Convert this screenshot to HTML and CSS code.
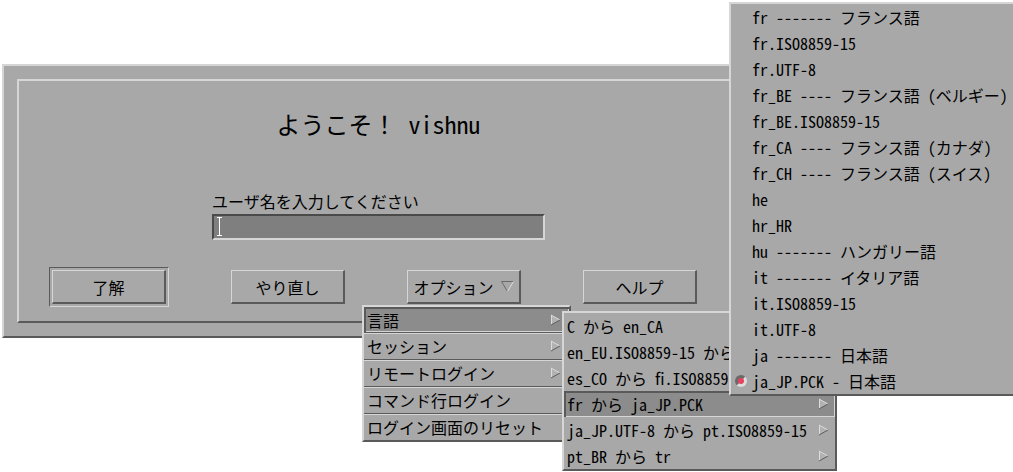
FILE: index.html
```html
<!DOCTYPE html>
<html lang="ja">
<head>
<meta charset="UTF-8">
<title>ログイン</title>
<link rel="stylesheet" href="styles.css">
</head>
<body>
<svg class="defs" aria-hidden="true">
<symbol id="tri-right" viewBox="0 0 11 12">
<polygon points="1,1 10,6 1,11" fill="#b2b2b2"/>
<path d="M1.5 1V11M1 1L10 6" stroke="#dcdcdc" fill="none"/>
<path d="M1 11L10 6" stroke="#5e5e5e" fill="none"/>
</symbol>
<symbol id="tri-down" viewBox="0 0 13 11">
<path d="M0.5 0.5H12.5M0.5 0.5L6.5 10.5" stroke="#6a6a6a" fill="none"/>
<path d="M12.5 0.5L6.5 10.5" stroke="#dcdcdc" fill="none"/>
</symbol>
</svg>

<div class="login">
<div class="frame">
<h1 class="welcome">ようこそ<span class="wide">！</span> vishnu</h1>
<div class="user">
<label for="name">ユーザ名を入力してください</label>
<div class="field" id="name">
<svg class="ibeam" width="5" height="19" viewBox="0 0 5 19"><path d="M0 0.5H5M2.5 0V19M0 18.5H5" stroke="#fff" fill="none"/></svg>
</div>
</div>
<div class="buttons">
<div class="default"><button>了解</button></div>
<button>やり直し</button>
<button>オプション<svg class="down" width="13" height="11"><use href="#tri-down"/></svg></button>
<button>ヘルプ</button>
</div>
</div>
</div>

<div class="menu options">
<div class="item armed">言語<svg class="arrow"><use href="#tri-right"/></svg></div>
<div class="item">セッション<svg class="arrow"><use href="#tri-right"/></svg></div>
<div class="item">リモートログイン<svg class="arrow"><use href="#tri-right"/></svg></div>
<div class="item">コマンド行ログイン</div>
<div class="item">ログイン画面のリセット</div>
</div>

<div class="menu locales">
<div class="item">C から en_CA<svg class="arrow"><use href="#tri-right"/></svg></div>
<div class="item">en_EU.ISO8859-15 から es_BO<svg class="arrow"><use href="#tri-right"/></svg></div>
<div class="item">es_CO から fi.ISO8859-15<svg class="arrow"><use href="#tri-right"/></svg></div>
<div class="item armed">fr から ja_JP.PCK<svg class="arrow"><use href="#tri-right"/></svg></div>
<div class="item">ja_JP.UTF-8 から pt.ISO8859-15<svg class="arrow"><use href="#tri-right"/></svg></div>
<div class="item">pt_BR から tr<svg class="arrow"><use href="#tri-right"/></svg></div>
</div>

<div class="menu languages">
<div class="item">fr ------- フランス語</div>
<div class="item">fr.ISO8859-15</div>
<div class="item">fr.UTF-8</div>
<div class="item">fr_BE ---- フランス語 (ベルギー)</div>
<div class="item">fr_BE.ISO8859-15</div>
<div class="item">fr_CA ---- フランス語 (カナダ)</div>
<div class="item">fr_CH ---- フランス語 (スイス)</div>
<div class="item">he</div>
<div class="item">hr_HR</div>
<div class="item">hu ------- ハンガリー語</div>
<div class="item">it ------- イタリア語</div>
<div class="item">it.ISO8859-15</div>
<div class="item">it.UTF-8</div>
<div class="item">ja ------- 日本語</div>
<div class="item selected"><span class="radio"></span>ja_JP.PCK - 日本語</div>
</div>
</body>
</html>
```

FILE: styles.css
```css
body {
margin: 0;
padding: 64px 0 0 2px;
background: #fff;
font-family: "Noto Sans CJK JP", sans-serif;
font-feature-settings: "hwid";
font-size: 16px;
color: #000;
}

.defs {
position: absolute;
width: 0;
height: 0;
}

/* login window */
.login {
width: 753px;
padding: 13px;
box-sizing: border-box;
background: #a8a8a8;
border: 2px solid;
border-color: #d6d6d6 #5a5a5a #5a5a5a #d6d6d6;
}

.frame {
padding: 29px 0 14px;
border: 2px solid;
border-color: #d6d6d6 #5a5a5a #5a5a5a #d6d6d6;
}

.welcome {
margin: 0;
font-size: 24px;
font-weight: normal;
line-height: 28px;
text-align: center;
}

.wide {
font-feature-settings: normal;
}

.user {
margin: 53px 0 0 193px;
}

.user label {
display: block;
line-height: 20px;
margin-bottom: 3px;
}

.field {
width: 333px;
height: 26px;
box-sizing: border-box;
padding: 1px 0 0 3px;
background: #7f7f7f;
border: 2px solid;
border-color: #4a4a4a #d6d6d6 #d6d6d6 #4a4a4a;
}

.ibeam {
display: block;
}

.buttons {
display: flex;
align-items: center;
gap: 62px;
margin-top: 27px;
padding-left: 30px;
}

.default {
padding: 2px;
border: 1px solid;
border-color: #5a5a5a #d6d6d6 #d6d6d6 #5a5a5a;
}

button {
display: flex;
align-items: center;
justify-content: center;
gap: 7px;
width: 114px;
height: 34px;
padding: 0;
background: #a8a8a8;
border-style: solid;
border-width: 1px 2px 2px 1px;
border-color: #d6d6d6 #5a5a5a #5a5a5a #d6d6d6;
font-family: inherit;
font-size: 16px;
font-feature-settings: inherit;
color: #000;
}

/* popup menus */
.menu {
position: absolute;
background: #a8a8a8;
border: 2px solid;
border-color: #d6d6d6 #5a5a5a #5a5a5a #d6d6d6;
}

.item {
display: flex;
align-items: center;
justify-content: space-between;
height: 26px;
box-sizing: border-box;
white-space: nowrap;
}

.armed {
background: #8c8c8c;
box-shadow: inset 2px 2px #5a5a5a, inset -1px -1px #d6d6d6;
}

.arrow {
width: 11px;
height: 12px;
flex: none;
}

.options {
left: 362px;
top: 305px;
width: 205px;
}

.options .item {
height: 25px;
padding: 0 8px 0 3px;
}

.options .item + .item {
height: 27px;
border-top: 1px solid #5a5a5a;
box-shadow: inset 0 1px #d6d6d6;
}

.locales {
left: 562px;
top: 311px;
width: 271px;
}

.locales .item {
padding: 0 6px 0 3px;
}

.languages {
left: 729px;
top: 2px;
width: 283px;
}

.languages .item {
justify-content: flex-start;
padding-left: 21px;
}

.languages .selected {
padding-left: 4px;
}

.radio {
width: 12px;
height: 12px;
margin-right: 5px;
box-sizing: border-box;
border: 3px solid;
border-color: #6a6a6a #dcdcdc #dcdcdc #6a6a6a;
border-radius: 50%;
background: #e8425e;
}
```
